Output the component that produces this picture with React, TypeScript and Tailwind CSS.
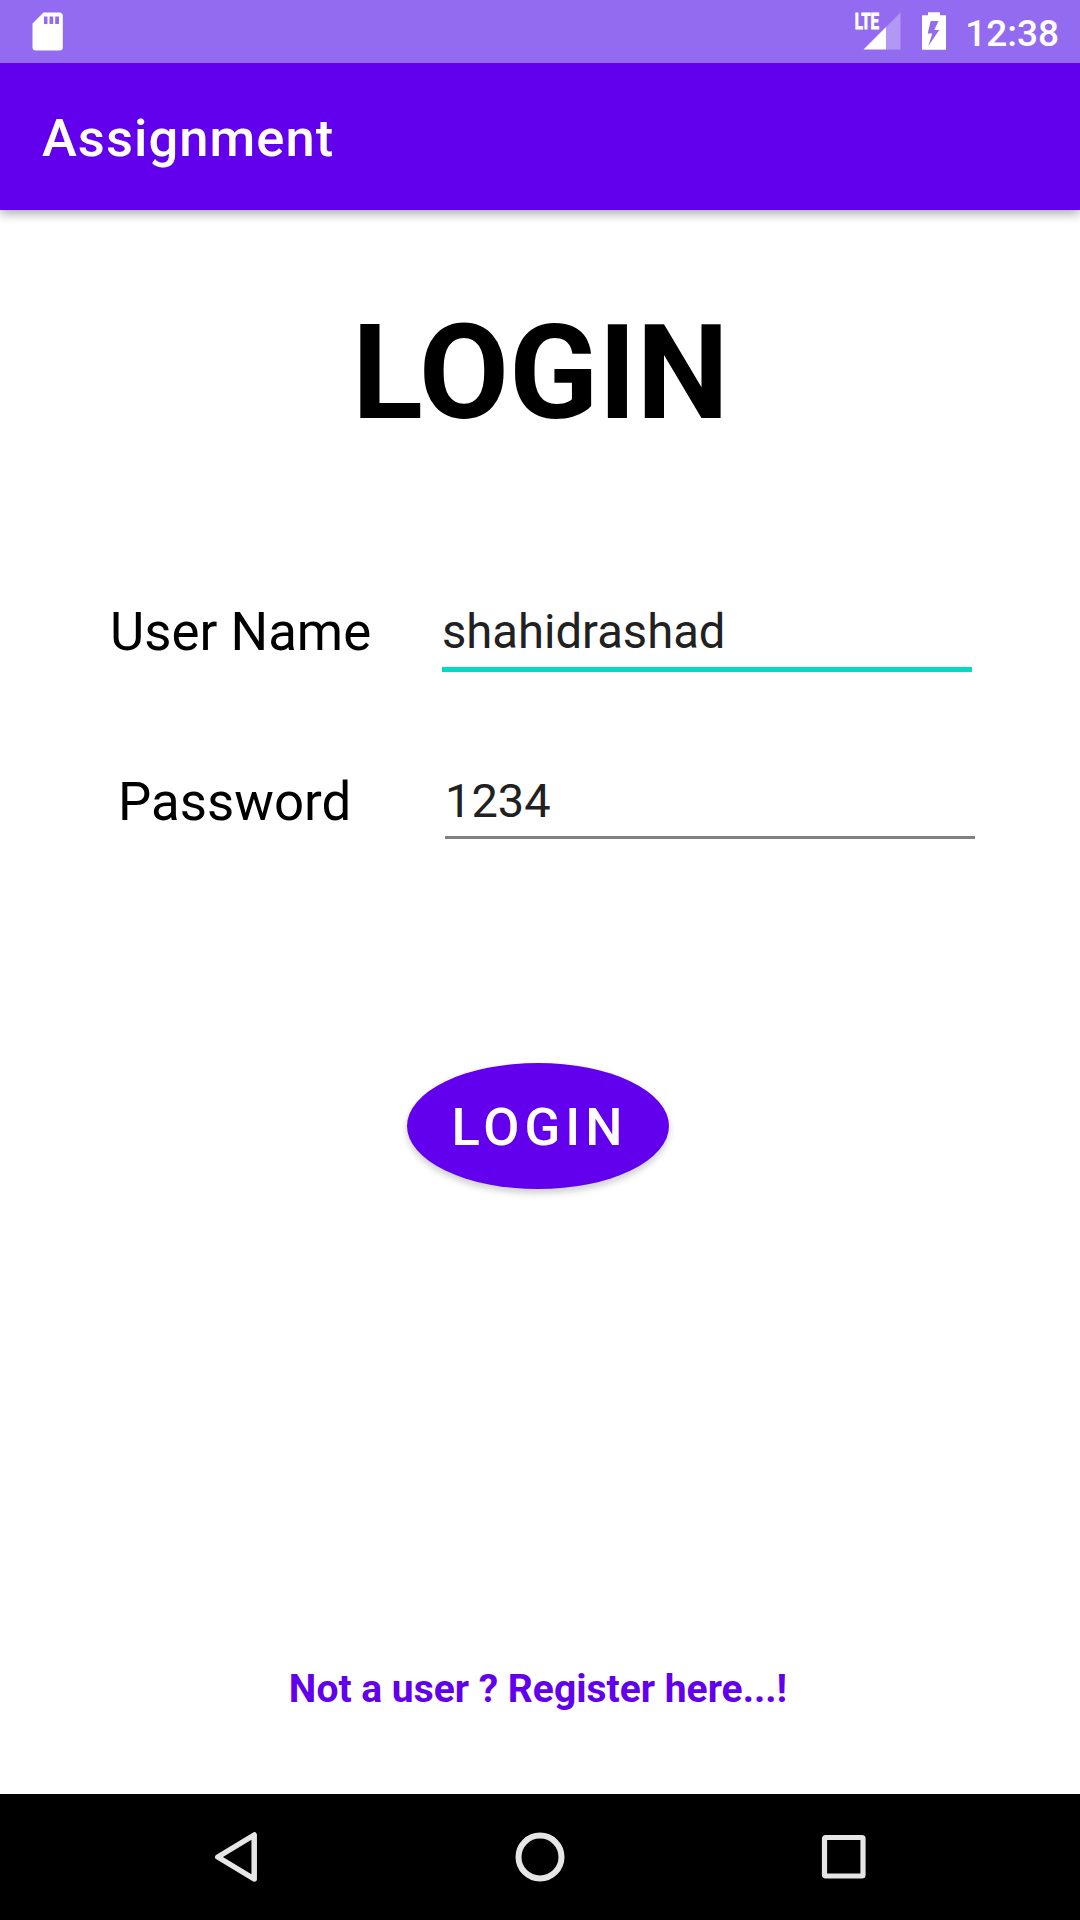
import React from "react";

function StatusBar() {
  return (
    <header className="relative z-20 flex h-[63px] shrink-0 items-start bg-[#926bf1] text-white">
      <svg className="ml-[32px] mt-[12px] h-[39px] w-[31px]" viewBox="0 0 31 39">
        <path fillRule="evenodd" fill="currentColor" d="M11.5 .5H27.5Q30.8 .5 30.8 4V35Q30.8 38.5 27.5 38.5H4Q.5 38.5 .5 35V11.5ZM12 4.5V12H15.5V4.5ZM17.5 4.5V12H21.2V4.5ZM23.2 4.5V12H27V4.5Z" />
      </svg>
      <svg className="ml-auto h-[63px] w-[50px]" viewBox="853 0 50 63">
        <path fill="#fff" fillOpacity=".3" d="M900.5 12.5V49.5H886V27Z" />
        <path fill="#fff" d="M886 27V49.5H863.5Z" />
        <text x="854.8" y="28.8" fill="#fff" stroke="#fff" strokeWidth=".9" fontSize="21.5" fontWeight="700" textLength="24.3" lengthAdjust="spacingAndGlyphs">LTE</text>
      </svg>
      <svg className="ml-[17px] h-[63px] w-[28px]" viewBox="920 0 28 63">
        <path fillRule="evenodd" fill="#fff" d="M928 12.3H940V15.2H946V49.8H922V15.2H928ZM930.7 21L927.7 33.5H932.3L928.3 46L939.3 30H934.3L938.5 21Z" />
      </svg>
      <div className="ml-[17px] mr-[21px] mt-[2px] text-[37px] font-medium leading-[63px]">12:38</div>
    </header>
  );
}

function Field({ label, value, focused }: { label: string; value: string; focused?: boolean }) {
  return (
    <div className="flex h-[170px] items-start">
      <label className={focused ? "ml-[110px] w-[332px] text-[52.8px] leading-[62px] text-black" : "ml-[118px] w-[327px] text-[52.8px] leading-[62px] text-black"}>{label}</label>
      <div className={focused ? "h-[71px] w-[530px] border-b-[5px] border-[#03dac5] text-[47.2px] leading-[62px] text-[#212121]" : "-mt-px h-[69px] w-[530px] border-b-[3px] border-[#808080] text-[47px] leading-[62px] text-[#212121]"}>{value}</div>
    </div>
  );
}

export default function App() {
  return (
    <div className="flex h-[1920px] w-[1080px] flex-col overflow-hidden bg-white font-['Roboto',sans-serif]">
      <StatusBar />
      <div className="z-10 flex h-[147px] shrink-0 items-center bg-[#6200ee] pl-[42px] pt-[4px] text-[52.5px] font-medium tracking-[1.05px] text-white shadow-[0_4px_10px_rgba(0,0,0,0.32)]">Assignment</div>
      <main className="flex flex-1 flex-col">
        <h1 className="mt-[86px] pl-[1px] text-center text-[131px] font-bold leading-[154px] text-black">LOGIN</h1>
        <div className="mt-[151px]">
          <Field label="User Name" value="shahidrashad" focused />
          <Field label="Password" value="1234" />
        </div>
        <button className="ml-[407px] mt-[122px] h-[126px] w-[262px] rounded-[50%] bg-[#6200ee] pl-[3px] pt-[3px] text-[52.5px] font-medium tracking-[5.1px] text-white shadow-[0_4px_7px_rgba(0,0,0,0.2)]">LOGIN</button>
        <a className="mb-[76px] mr-[4px] mt-auto text-center text-[39px] font-bold text-[#6200ee]">Not a user ? Register here...!</a>
      </main>
      <nav className="flex h-[126px] shrink-0 items-center justify-between bg-black pl-[210px] pr-[206px] text-[#e6e6e6]">
        <svg className="h-[60px] w-[60px]" viewBox="210 1827 60 60"><path d="M254.2 1835V1879L217.8 1857Z" fill="none" stroke="currentColor" strokeWidth="5.5" strokeLinejoin="round" /></svg>
        <svg className="h-[60px] w-[60px]" viewBox="0 0 60 60"><circle cx="28" cy="30" r="21.5" fill="none" stroke="currentColor" strokeWidth="6" /></svg>
        <svg className="h-[60px] w-[60px]" viewBox="0 0 60 60"><rect x="10.5" y="10.5" width="38.5" height="38.5" rx="1" fill="none" stroke="currentColor" strokeWidth="5.2" strokeLinejoin="round" /></svg>
      </nav>
    </div>
  );
}
